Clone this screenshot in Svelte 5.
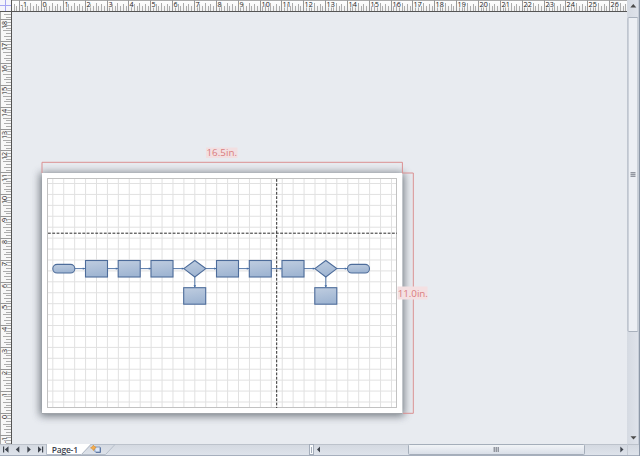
<script>
  const unit = 21.85;
  const h = [];
  for (let i = -12; i <= 218; i++) {
    const x = Math.round(42 + (i * unit) / 8) - 1;
    if (x > 12 && x < 627) h.push({ x, i, len: len(i) });
  }
  const v = [];
  for (let i = -11; i <= 146; i++) {
    const y = Math.round(412.7 - (i * unit) / 8);
    if (y > 12 && y < 444) v.push({ y, i, len: len(i) });
  }
  function len(i) {
    if (i % 8 === 0) return 11;
    if (i % 4 === 0) return 8;
    return i % 2 === 0 ? 7 : 5;
  }
  const gridX = Array.from({ length: 32 }, (_, k) => 52.8 + k * 10.925);
  const gridY = Array.from({ length: 21 }, (_, k) => 183.5 + k * 10.925);
  const boxes = [
    [85.5, 260.5], [118.2, 260.5], [151, 260.5], [216.5, 260.5], [249.3, 260.5], [282, 260.5],
    [183.7, 287.7], [314.8, 287.7]
  ];
  const links = [[75, 85], [107, 118], [140, 151], [173, 184], [206, 216.5], [238, 249], [271, 282], [304, 315], [337, 347]];
  const diamonds = [194.8, 325.8];
  const pills = [52.8, 347.5];
</script>

<div class="app">
  <div class="main">
    <svg class="canvas" width="627" height="444" viewBox="0 0 627 444">
      <defs>
        <linearGradient id="fill" x1="0" y1="0" x2=".2" y2="1">
          <stop offset="0" stop-color="#bfcde0" /><stop offset="1" stop-color="#9fb5d2" />
        </linearGradient>
        <linearGradient id="top" x1="0" y1="0" x2="0" y2="1">
          <stop offset="0" stop-color="#ffffff" /><stop offset="1" stop-color="#f1f1f1" />
        </linearGradient>
        <filter id="soft" x="-5%" y="-8%" width="110%" height="116%"><feGaussianBlur stdDeviation="4.5" /></filter>
      </defs>
      <rect width="627" height="444" fill="#e8ebf0" />

      <rect x="40" y="173" width="364" height="243" fill="#646b72" opacity=".9" filter="url(#soft)" />
      <rect x="42" y="173" width="360.4" height="240" fill="#fff" />
      <path d="M42 413.5H402" stroke="#a0a4a9" fill="none" />
      <g stroke="#e1e1e1" stroke-width="1">
        {#each gridX as x}<path d="M{x} 178V408" />{/each}
        {#each gridY as y}<path d="M47 {y}H397" />{/each}
      </g>
      <rect x="47.5" y="178.5" width="349" height="229" fill="none" stroke="#c2c2c2" />
      <path d="M48 233.2H397M276.7 179V408" stroke="#2c2c2c" stroke-width="1" stroke-dasharray="2.8 1.5" fill="none" />

      <g stroke="#5578a8" fill="#466ea6" stroke-width="1">
        {#each links as [a, b]}
          <path d="M{a} 268.6H{b}" /><path d="M{b - 2.2} 267.4L{b} 268.6L{b - 2.2} 269.8Z" stroke="none" />
        {/each}
        {#each diamonds as x}
          <path d="M{x} 277V287" /><path d="M{x - 1.3} 285.2L{x} 287.5L{x + 1.3} 285.2Z" stroke="none" />
        {/each}
      </g>
      <g fill="url(#fill)" stroke="#4d6c9a" stroke-width="1.1">
        {#each boxes as [x, y]}<rect {x} {y} width="22" height="16.5" />{/each}
        {#each diamonds as x}<path d="M{x - 11} 268.6L{x} 260.5L{x + 11} 268.6L{x} 277Z" />{/each}
        {#each pills as x}<rect {x} y="264.4" width="22" height="8.6" rx="4.3" />{/each}
      </g>

      <path d="M42 173V162.3H402.4V173M402 173H413.3V413.3H403" stroke="#da9092" fill="none" />
      <rect x="206" y="147.5" width="31.5" height="10.5" fill="#f2dfe1" />
      <text class="dim" x="206.5" y="156.3" textLength="30.5">16.5in.</text>
      <rect x="397.5" y="286.5" width="30" height="13" fill="#f4e0e2" />
      <text class="dim" x="397.8" y="296.6" textLength="30">11.0in.</text>

      <rect width="627" height="11" fill="url(#top)" />
      <rect width="11" height="444" fill="#f8f8f8" />
      <path d="M0 .5H627M.5 0V444" stroke="#a9a9a9" />
      {#each h as t}
        <path d="M{t.x + 0.5} {11 - t.len}V11" stroke={t.i % 8 ? '#acacac' : '#989898'} />
      {/each}
      {#each v as t}
        <path d="M{11 - t.len} {t.y + 0.5}H11" stroke={t.i % 8 ? '#acacac' : '#989898'} />
      {/each}
      {#each h.filter((t) => t.i % 8 === 0) as t}
        <text class="num" x={t.x + 1.6} y="6.8">{t.i / 8}</text>
      {/each}
      {#each v.filter((t) => t.i % 8 === 0) as t}
        <text class="num" text-anchor="end" transform="translate(6.6 {t.y + 1.8}) rotate(-90)">{t.i / 8}</text>
      {/each}
      <path d="M11 11.5H627M11.5 11V444" stroke="#555" />
      <rect width="12" height="12" fill="#f4f4fb" />
      <path d="M0 5.5H11M5.5 0V11" stroke="#a5a5f2" />
      <path d="M0 11.5H12M11.5 0V12" stroke="#555" />
    </svg>
    <div class="vbar">
      <svg width="13" height="444" viewBox="0 0 13 444">
        <path d="M3.3 7.5L6.3 4L9.3 7.5Z" fill="#4b4b4b" />
        <rect class="vthumb" x="1" y="17.5" width="10" height="314" rx="1" />
        <path d="M3.5 172.5H8.5M3.5 174.5H8.5M3.5 176.5H8.5" stroke="#9296a0" />
        <path d="M3.5 173.5H8.5M3.5 175.5H8.5" stroke="#c0c4ca" />
        <path d="M3.5 436.3H9.5L6.5 439.5Z" fill="#4b4b4b" />
        <path d="M11.5 0V444" stroke="#c6cdd7" /><path d="M12.5 0V444" stroke="#8d98a8" />
      </svg>
    </div>
  </div>
  <div class="foot">
    <svg width="640" height="12" viewBox="0 0 640 12">
      <defs>
        <linearGradient id="thumb" x1="0" y1="0" x2="0" y2="1">
          <stop offset="0" stop-color="#f3f5f8" /><stop offset="1" stop-color="#d8dee7" />
        </linearGradient>
        <linearGradient id="bar" x1="0" y1="0" x2="0" y2="1">
          <stop offset="0" stop-color="#d3d8e0" /><stop offset="1" stop-color="#dfe4ec" />
        </linearGradient>
      </defs>
      <rect width="640" height="12" fill="url(#bar)" />
      <path d="M0 .5H47M81 .5H640" stroke="#bcc2cb" />
      <g fill="#3f454e">
        <path d="M3 2.5H4.2V8.5H3ZM8.5 2.3V8.7L4.8 5.5Z" />
        <path d="M19.3 2.3V8.7L15.8 5.5Z" />
        <path d="M27.3 2.3V8.7L30.8 5.5Z" />
        <path d="M38 2.3V8.7L41.5 5.5ZM42 2.5H43.2V8.5H42Z" />
        <path d="M320 2.5V8.5L317 5.5Z" />
        <path d="M620.3 2.5V8.5L623.5 5.5Z" />
      </g>
      <path d="M46.5 0V10.5H81L90.5 0Z" fill="#fff" />
      <path d="M46.5 0V10.5H81.5L91 .5" fill="none" stroke="#b4bcc8" />
      <path d="M91 .5H115L105.5 10.5H82" fill="none" stroke="#b7bfca" />
      <path d="M94.5 3H100V8H95Z" fill="#dce7f7" stroke="#8197bb" />
      <path d="M96 8.5H100.5V3.5" fill="none" stroke="#5f79a5" />
      <path d="M93.3 1.2L94.5 2.6L96.2 3.5L94.6 4.7L93.5 6.6L92.4 4.8L90.6 3.8L92.4 2.7Z" fill="#f4ac4d" stroke="#d58829" stroke-width=".6" />
      <rect x="309.5" y=".5" width="4" height="10" fill="#f7f9fb" stroke="#a4adba" />
      <path d="M311.5 3V9" stroke="#a4adba" />
      <rect x="408.5" y=".5" width="176" height="10" rx="1" fill="url(#thumb)" stroke="#a5aeba" />
      <path d="M494.5 3V8M496.5 3V8M498.5 3V8" stroke="#9296a0" />
      <path d="M493.5 3V8M495.5 3V8M497.5 3V8" stroke="#c0c4ca" />
      <path d="M627.5 0V11" stroke="#c6ccd5" />
      <path d="M0 11.5H640" stroke="#a6afbd" /><path d="M639.5 0V12" stroke="#8e99a9" />
      <text class="tab" x="51.8" y="8.6" textLength="26.2">Page-1</text>
    </svg>
  </div>
</div>

<style>
  :global(body) { margin: 0; overflow: hidden; }
  .app { width: 640px; height: 456px; display: flex; flex-direction: column; background: #e8ebf0; }
  .main { display: flex; height: 444px; }
  .vbar { width: 13px; background: linear-gradient(90deg, #d5dae2, #e0e4ec); }
  .foot { height: 12px; }
  svg { display: block; }
  .vthumb { fill: #eceff4; stroke: #a9b1bd; }
  text { font-family: "Open Sans", "Noto Sans", sans-serif; }
  .dim { font-size: 9.8px; fill: #d97c7e; }
  .num { font-size: 7.2px; font-weight: 500; fill: #222; stroke: #f8f8f8; stroke-width: 0.9px; paint-order: stroke; }
  .tab { font-size: 8.5px; font-weight: 600; fill: #3d4450; }
</style>
